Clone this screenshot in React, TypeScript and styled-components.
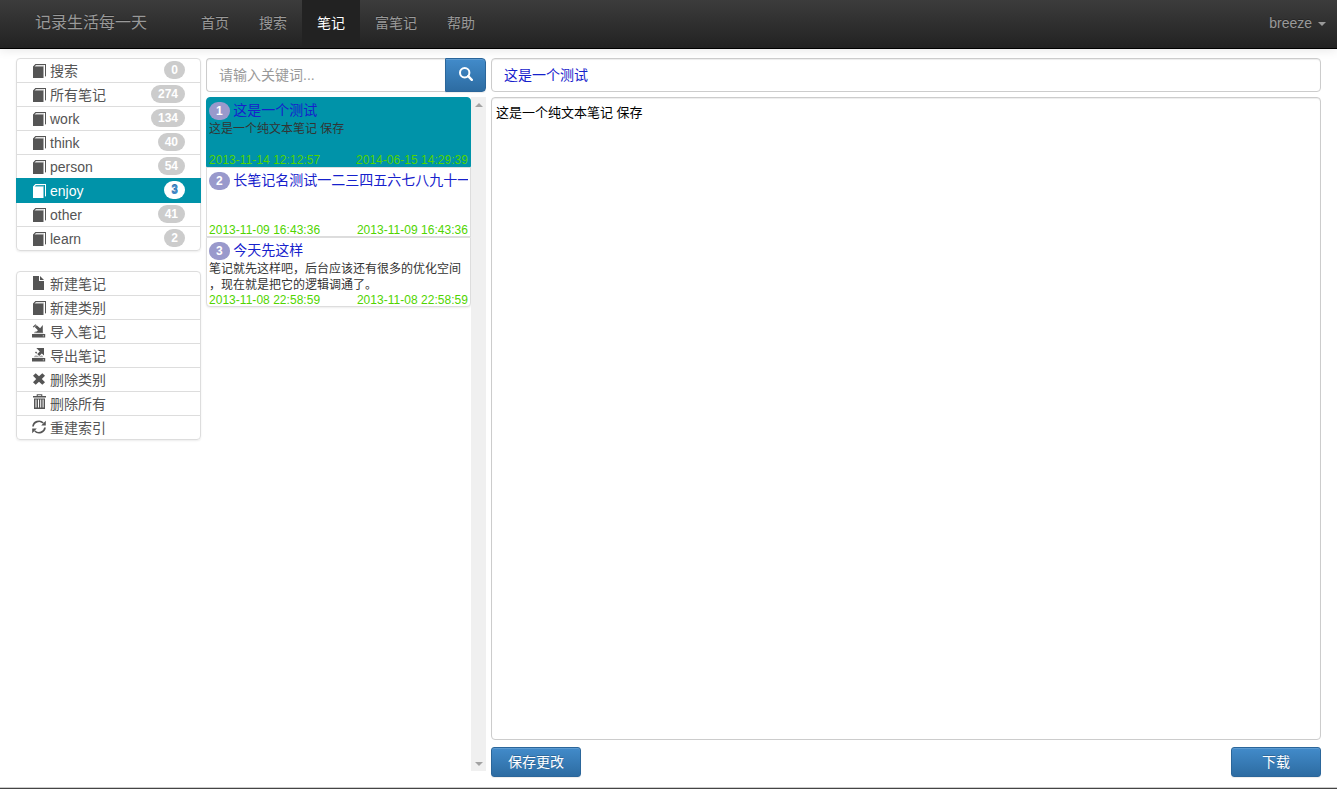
import React from 'react';
import styled, { createGlobalStyle, css } from 'styled-components';

const GlobalStyle = createGlobalStyle`
  *, *::before, *::after { box-sizing: border-box; }
  html, body { margin: 0; padding: 0; height: 100%; overflow: hidden; }
  body {
    font-family: "Liberation Sans", "Noto Sans CJK SC", sans-serif;
    font-size: 14px;
    line-height: 20px;
    color: #333;
    background: #fff;
  }
  input, button, textarea { font: inherit; margin: 0; }
`;

const Page = styled.div`
  height: 789px;
  display: flex;
  flex-direction: column;
`;

const Navbar = styled.nav`
  flex: none;
  height: 49px;
  display: flex;
  padding-left: 20px;
  background: linear-gradient(to bottom, #3c3c3c 0%, #222 100%);
  border-bottom: 1px solid #000;
  box-shadow: 0 1px 10px rgba(0, 0, 0, 0.1);
  text-shadow: 0 -1px 0 rgba(0, 0, 0, 0.25);
`;

const Brand = styled.a`
  width: 166px;
  padding: 13px 15px;
  font-size: 16px;
  color: #999;
`;

const NavLink = styled.a<{ $active?: boolean }>`
  height: 48px;
  padding: 13px 15px 0;
  white-space: nowrap;
  color: ${p => (p.$active ? '#fff' : '#999')};
  ${p => p.$active && css`
    background: #222;
  `}
`;

const UserMenu = styled.a`
  display: flex;
  align-items: center;
  gap: 6px;
  height: 46px;
  margin-left: auto;
  padding-right: 11px;
  color: #999;
`;

const Caret = styled.span`
  margin-top: 2px;
  border: 4px solid transparent;
  border-top-color: currentColor;
  border-bottom: 0;
`;

const Main = styled.main`
  flex: 1;
  min-height: 0;
  display: grid;
  grid-template-columns: 185px 280px 830px;
  column-gap: 5px;
  padding: 9px 16px 0;
`;

const Sidebar = styled.aside`
  display: flex;
  flex-direction: column;
  gap: 20px;
`;

const ListGroup = styled.ul`
  list-style: none;
  margin: 0;
  padding: 0;
  border-radius: 4px;
  box-shadow: 0 1px 2px rgba(0, 0, 0, 0.075);
`;

const ListItem = styled.li<{ $active?: boolean }>`
  position: relative;
  height: 25px;
  display: flex;
  align-items: flex-start;
  padding: 2px 15px 0;
  margin-bottom: -1px;
  border: 1px solid #ddd;
  color: #555;
  background: #fff;
  &:first-child { border-radius: 4px 4px 0 0; }
  &:last-child { border-radius: 0 0 4px 4px; margin-bottom: 0; }
  ${p => p.$active && css`
    z-index: 1;
    color: #fff;
    border-color: #0093a9;
    background: #0093a9;
  `}
`;

const Icon = styled.svg`
  flex: none;
  width: 14px;
  height: 14px;
  margin-right: 4px;
  fill: currentColor;
`;

const ListIcon = styled(Icon)<{ $drop: number }>`
  margin-top: ${p => p.$drop}px;
`;

const Badge = styled.span<{ $active?: boolean }>`
  height: 18px;
  min-width: 10px;
  margin-left: auto;
  padding: 3px 7px;
  border-radius: 10px;
  font-size: 12px;
  font-weight: bold;
  line-height: 12px;
  color: ${p => (p.$active ? '#428bca' : '#fff')};
  background: ${p => (p.$active ? '#fff' : '#ccc')};
  text-shadow: ${p => (p.$active ? '0 -1px 0 #3071a9' : 'none')};
`;

const Column = styled.section`
  display: flex;
  flex-direction: column;
  gap: 5px;
`;

const SearchGroup = styled.div`
  display: flex;
  height: 34px;
`;

const field = css`
  border: 1px solid #ccc;
  border-radius: 4px;
  background: #fff;
  box-shadow: inset 0 1px 1px rgba(0, 0, 0, 0.075);
  outline: 0;
`;

const SearchInput = styled.input`
  ${field}
  width: 239px;
  padding: 6px 12px;
  border-right: 0;
  border-radius: 4px 0 0 4px;
  &::placeholder { color: #999; opacity: 1; }
`;

const primary = css`
  border: 1px solid #2b669a;
  color: #fff;
  background: linear-gradient(to bottom, #428bca 0%, #2d6ca2 100%);
  box-shadow: inset 0 1px 0 rgba(255, 255, 255, 0.15), 0 1px 1px rgba(0, 0, 0, 0.075);
  text-shadow: 0 -1px 0 rgba(0, 0, 0, 0.2);
`;

const SearchButton = styled.button`
  ${primary}
  width: 41px;
  padding: 0 0 2px;
  display: flex;
  align-items: center;
  justify-content: center;
  border-radius: 0 4px 4px 0;
  ${Icon} { margin: 0; }
`;

const NotesPane = styled.div`
  display: flex;
  height: 674px;
`;

const Notes = styled.ul`
  width: 265px;
  margin: 0;
  padding: 0;
  list-style: none;
`;

const Note = styled.li<{ $active?: boolean }>`
  height: 70px;
  padding: 3px 2px 0;
  display: flex;
  flex-direction: column;
  border: 1px solid ${p => (p.$active ? '#0093a9' : '#ddd')};
  background: ${p => (p.$active ? '#0093a9' : '#fff')};
  &:first-child { border-radius: 4px 4px 0 0; }
  &:last-child { border-radius: 0 0 4px 4px; box-shadow: 0 1px 2px rgba(0, 0, 0, 0.075); }
`;

const NoteHead = styled.div`
  flex: none;
  height: 20px;
  display: flex;
  gap: 3.5px;
`;

const NoteNumber = styled.span`
  flex: none;
  height: 18px;
  margin-top: 1px;
  padding: 3px 7px;
  border-radius: 10px;
  font-size: 12px;
  font-weight: bold;
  line-height: 12px;
  color: #fff;
  background: #9999cc;
`;

const NoteTitle = styled.span`
  height: 20px;
  margin-top: -1px;
  overflow: hidden;
  white-space: nowrap;
  color: #1621cc;
`;

const NoteText = styled.p`
  flex: none;
  height: 31px;
  margin: 0;
  overflow: hidden;
  font-size: 12px;
  line-height: 16px;
  line-break: anywhere;
`;

const NoteDates = styled.div`
  display: flex;
  justify-content: space-between;
  font-size: 12px;
  line-height: 16px;
  letter-spacing: 0.03px;
  color: #51d400;
`;

const Scrollbar = styled.div`
  width: 15px;
  padding: 6px 0 5px;
  display: flex;
  flex-direction: column;
  justify-content: space-between;
  align-items: center;
  background: #f0f0f0;
`;

const ScrollArrow = styled.span<{ $down?: boolean }>`
  border: 4px solid transparent;
  ${p => p.$down
    ? css`border-top-color: #a3a3a3; border-bottom: 0;`
    : css`border-bottom-color: #a3a3a3; border-top: 0;`}
`;

const TitleInput = styled.input`
  ${field}
  height: 34px;
  padding: 5px 12px 7px;
  color: #1621cc;
`;

const Editor = styled.textarea`
  ${field}
  display: block;
  height: 643px;
  padding: 5px 4px;
  resize: none;
  font-size: 13px;
  color: #000;
`;

const Actions = styled.div`
  display: flex;
  justify-content: space-between;
  padding-top: 2px;
`;

const ActionButton = styled.button`
  ${primary}
  width: 90px;
  height: 30px;
  padding: 0;
  border-radius: 3px;
`;

const BottomBar = styled.footer`
  flex: none;
  height: 1px;
  background: #444;
  box-shadow: 0 -1px 0 #ccc;
`;

type IconName = 'book' | 'file' | 'import' | 'export' | 'remove' | 'trash' | 'refresh';

const glyphs: Record<IconName, React.ReactNode> = {
  book: (
    <>
      <path d="M1 2.5 3.4 0H14v1H4L2.6 2.5H11.5V14H1Z" />
      <path d="M13 1h1v11l-1 .8Z" />
      <path d="M3.4 1.5H12V2.5H2.6Z" opacity="0.35" />
    </>
  ),
  file: <path d="M1 0h6v5h5v9H1ZM8 0l4 4H8Z" />,
  import: (
    <>
      <path d="M0 10h13.2v3.4H0ZM10.8 11.4v.8h1.2v-.8Z" fillRule="evenodd" />
      <path d="M1.8 9.2 3 7.4h7.3l1.2 1.8Z" opacity="0.65" />
      <path d="M10.8 1v7.4H3.9l2-2.1-3.2-3.2 2-1.8 3.4 3Z" />
      <path d="M.8 2.8 3.4.2l.9.7L1.7 3.6Z" />
    </>
  ),
  export: (
    <>
      <path d="M0 10h13.2v3.4H0ZM10.8 11.4v.8h1.2v-.8Z" fillRule="evenodd" />
      <path d="M1.8 9.2 3 7.6h2.2l1 1h1.6l1-1h1.4l1.2 1.6Z" opacity="0.5" />
      <path d="M4.3 0H12v7.5L9.8 5.4 7.2 8 5.2 6l2.6-2.6Z" />
      <path d="M3 4.5 4 3.5l1.2 1.2-1 1Z" />
    </>
  ),
  remove: (
    <path d="M3.7 1.2 7 4.3l3.3-3.1 2.7 2.6L9.8 7l3.2 3.2-2.7 2.6L7 9.7l-3.3 3.1L1 10.2 4.2 7 1 3.8Z" />
  ),
  trash: (
    <>
      <path d="M1 2h13v1.6H1ZM4.7 2V.2h5.6V2H9.2v-.8H5.8V2Z" />
      <path d="M2 4.6h11V15H2ZM3.5 5.4v8.2h1V5.4ZM6 5.4v8.2h1V5.4ZM8.2 5.4v8.2h1V5.4ZM10.6 5.4v8.2h1V5.4Z" fillRule="evenodd" />
    </>
  ),
  refresh: (
    <>
      <path d="M1 6.5A6 5.8 0 0 1 11.2 3M13 7.5A6 5.8 0 0 1 2.8 11" fill="none" stroke="currentColor" strokeWidth="1.7" />
      <path d="M13.8.8v4.6H9.2ZM.2 13.2V8.6h4.6Z" />
    </>
  ),
};

const iconDrop: Record<IconName, number> = {
  book: 3, file: 2, import: 2, export: 2, remove: 2, trash: 0, refresh: 2,
};

const Glyph = ({ name }: { name: IconName }) => (
  <ListIcon viewBox="0 0 14 14" $drop={iconDrop[name]} overflow="visible">
    {glyphs[name]}
  </ListIcon>
);

const categories = [
  { name: '搜索', count: 0 },
  { name: '所有笔记', count: 274 },
  { name: 'work', count: 134 },
  { name: 'think', count: 40 },
  { name: 'person', count: 54 },
  { name: 'enjoy', count: 3 },
  { name: 'other', count: 41 },
  { name: 'learn', count: 2 },
];

const commands: { label: string; icon: IconName }[] = [
  { label: '新建笔记', icon: 'file' },
  { label: '新建类别', icon: 'book' },
  { label: '导入笔记', icon: 'import' },
  { label: '导出笔记', icon: 'export' },
  { label: '删除类别', icon: 'remove' },
  { label: '删除所有', icon: 'trash' },
  { label: '重建索引', icon: 'refresh' },
];

const notes = [
  { title: '这是一个测试', text: '这是一个纯文本笔记 保存', created: '2013-11-14 12:12:57', updated: '2014-06-15 14:29:39' },
  { title: '长笔记名测试一二三四五六七八九十一', text: '', created: '2013-11-09 16:43:36', updated: '2013-11-09 16:43:36' },
  { title: '今天先这样', text: '笔记就先这样吧，后台应该还有很多的优化空间，现在就是把它的逻辑调通了。', created: '2013-11-08 22:58:59', updated: '2013-11-08 22:58:59' },
];

const navItems = ['首页', '搜索', '笔记', '富笔记', '帮助'];

export default function App() {
  return (
    <Page lang="zh-CN">
      <GlobalStyle />
      <Navbar>
        <Brand>记录生活每一天</Brand>
        {navItems.map(item => (
          <NavLink key={item} $active={item === '笔记'}>{item}</NavLink>
        ))}
        <UserMenu>breeze<Caret /></UserMenu>
      </Navbar>
      <Main>
        <Sidebar>
          <ListGroup>
            {categories.map(c => (
              <ListItem key={c.name} $active={c.name === 'enjoy'}>
                <Glyph name="book" />
                {c.name}
                <Badge $active={c.name === 'enjoy'}>{c.count}</Badge>
              </ListItem>
            ))}
          </ListGroup>
          <ListGroup>
            {commands.map(c => (
              <ListItem key={c.label}>
                <Glyph name={c.icon} />
                {c.label}
              </ListItem>
            ))}
          </ListGroup>
        </Sidebar>
        <Column>
          <SearchGroup>
            <SearchInput placeholder="请输入关键词..." />
            <SearchButton aria-label="搜索">
              <Icon viewBox="0 0 14 14">
                <circle cx="5.7" cy="5.7" r="4.7" fill="none" stroke="currentColor" strokeWidth="2" />
                <path d="m9.2 9.2 3.6 3.6" stroke="currentColor" strokeWidth="2.4" strokeLinecap="round" />
              </Icon>
            </SearchButton>
          </SearchGroup>
          <NotesPane>
            <Notes>
              {notes.map((n, i) => (
                <Note key={n.title} $active={i === 0}>
                  <NoteHead>
                    <NoteNumber>{i + 1}</NoteNumber>
                    <NoteTitle>{n.title}</NoteTitle>
                  </NoteHead>
                  <NoteText>{n.text}</NoteText>
                  <NoteDates>
                    <span>{n.created}</span>
                    <span>{n.updated}</span>
                  </NoteDates>
                </Note>
              ))}
            </Notes>
            <Scrollbar>
              <ScrollArrow />
              <ScrollArrow $down />
            </Scrollbar>
          </NotesPane>
        </Column>
        <Column>
          <TitleInput defaultValue="这是一个测试" />
          <Editor defaultValue="这是一个纯文本笔记 保存" spellCheck={false} />
          <Actions>
            <ActionButton>保存更改</ActionButton>
            <ActionButton>下载</ActionButton>
          </Actions>
        </Column>
      </Main>
      <BottomBar />
    </Page>
  );
}
